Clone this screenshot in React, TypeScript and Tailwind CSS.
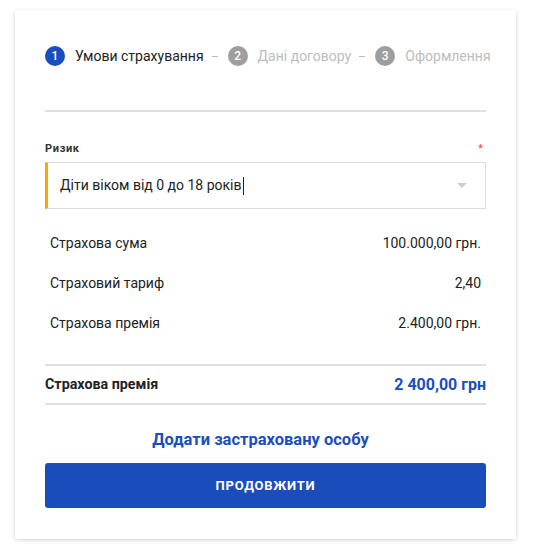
import React from 'react'

const rows = [
  { label: 'Страхова сума', value: '100.000,00 грн.' },
  { label: 'Страховий тариф', value: '2,40' },
  { label: 'Страхова премія', value: '2.400,00 грн.' },
]

function StepDot({ n, active }: { n: number; active?: boolean }) {
  return (
    <span
      className={
        'inline-flex h-[20px] w-[20px] shrink-0 items-center justify-center rounded-full text-[12px] font-medium text-white ' +
        (active ? 'bg-[#1a4dbe]' : 'bg-[#9e9e9e]')
      }
    >
      {n}
    </span>
  )
}

function StepDash() {
  return <span className="ml-[8px] mr-[10px] inline-block h-[1px] w-[6px] shrink-0 bg-[#bdbdbd]" />
}

export default function App() {
  return (
    <div className="min-h-[557px] bg-white pt-[10px] pl-[15px] font-['Roboto',sans-serif]">
      <div className="w-[501px] bg-white px-[30px] pt-[36px] pb-[31px] shadow-[0_1px_4px_rgba(0,0,0,0.18)] rounded-[2px]">
        {/* stepper */}
        <div className="flex h-[20px] items-center text-[14px] whitespace-nowrap">
          <StepDot n={1} active />
          <span className="ml-[10px] text-[#222]">Умови страхування</span>
          <StepDash />
          <StepDot n={2} />
          <span className="ml-[10px] text-[#bdbdbd]">Дані договору</span>
          <StepDash />
          <StepDot n={3} />
          <span className="ml-[10px] text-[#bdbdbd]">Оформлення</span>
        </div>
        <div className="mt-[44px] h-[2px] bg-[#e0e0e0]" />

        {/* risk select */}
        <div className="mt-[30px] flex items-center justify-between">
          <span className="text-[11px] font-bold leading-[13px] tracking-[0.06em] text-[#333]">Ризик</span>
          <span className="mr-[3px] text-[11px] leading-[13px] text-[#f44336]">*</span>
        </div>
        <div className="mt-[7px] flex h-[47px] items-center justify-between border border-l-[3px] border-[#dcdcdc] border-l-[#ffa500] pl-[12px] pr-[18px]">
          <span className="flex items-center text-[14px] text-[#222]">
            Діти віком від 0 до 18 років
            <span className="ml-[1px] inline-block h-[18px] w-[1px] bg-[#222]" />
          </span>
          <span className="h-0 w-0 border-x-[5px] border-t-[5px] border-x-transparent border-t-[#cfcfcf]" />
        </div>

        {/* details */}
        <div className="mt-[14px]">
          {rows.map((r) => (
            <div key={r.label} className="flex h-[40px] items-center justify-between px-[5px] text-[14px] text-[#222]">
              <span>{r.label}</span>
              <span>{r.value}</span>
            </div>
          ))}
        </div>

        <div className="mt-[21px] border-y-2 border-[#e0e0e0]">
          <div className="flex h-[37px] items-center justify-between">
            <span className="text-[14.3px] font-bold text-[#222]">Страхова премія</span>
            <span className="text-[16px] font-bold text-[#1a4dbe]">2 400,00 грн</span>
          </div>
        </div>

        <div className="mt-[25px] pr-[10px] text-center text-[16.5px] font-bold leading-[20px] text-[#1a4dbe]">
          Додати застраховану особу
        </div>
        <button className="mt-[13px] flex h-[45px] w-full items-center justify-center rounded-[3px] bg-[#1a4dbb] text-[13px] font-bold tracking-[0.06em] text-white">
          ПРОДОВЖИТИ
        </button>
      </div>
    </div>
  )
}
